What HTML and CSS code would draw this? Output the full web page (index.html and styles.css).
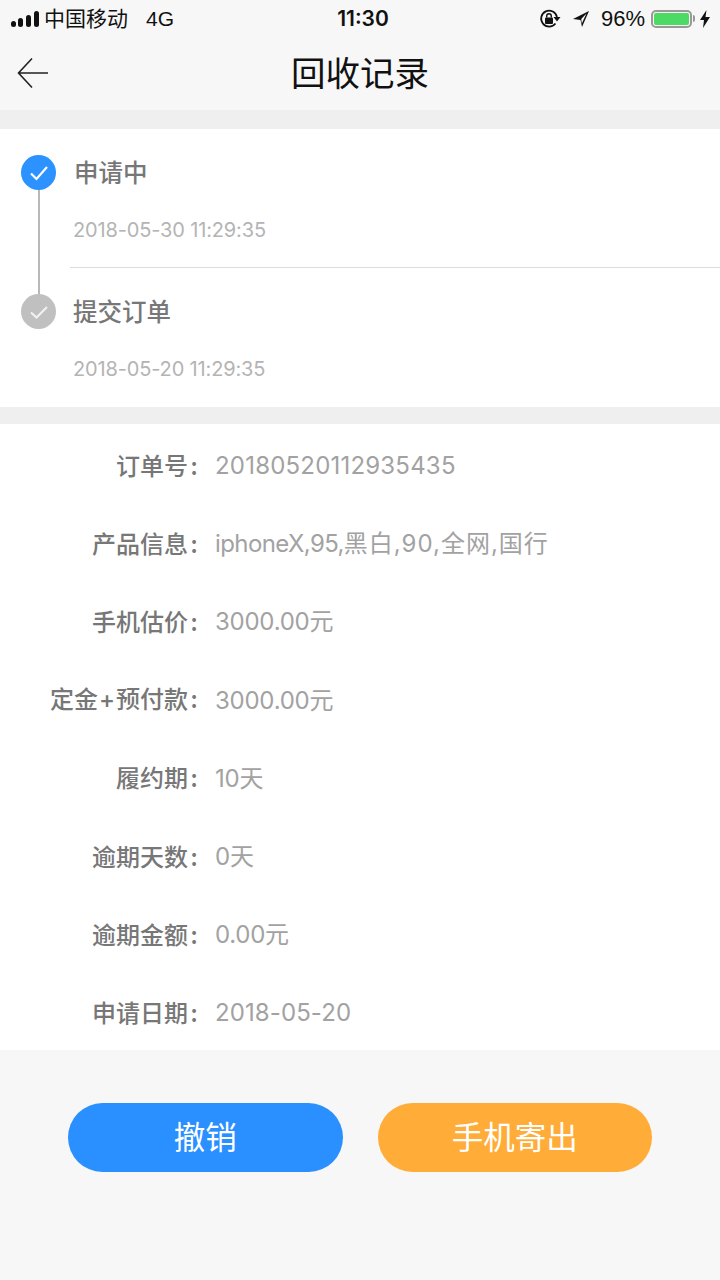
FILE: index.html
```html
<!DOCTYPE html>
<html lang="zh">
<head>
<meta charset="utf-8">
<title>回收记录</title>
<link rel="stylesheet" href="styles.css">
</head>
<body>
<div class="app">
  <div class="status">
    <div class="status-left">
      <svg class="signal" width="29" height="18" viewBox="0 0 29 18"><rect x="0" y="11" width="5" height="6" rx="2.5"/><rect x="7" y="8" width="5" height="9" rx="2.5"/><rect x="15" y="5" width="5" height="12" rx="2.5"/><rect x="23" y="1" width="5" height="16" rx="2.5"/></svg>
      <span class="carrier">中国移动</span>
      <span class="net">4G</span>
    </div>
    <div class="clock">11:30</div>
    <div class="status-right">
      <svg class="lock" width="22" height="22" viewBox="0 0 22 22"><path d="M16.500 15.500A8 8 0 1 1 18 9" fill="none" stroke="#111" stroke-width="1.700"/><path d="M14.500 9h7l-3.500 4.500z" fill="#111"/><rect x="6" y="9.500" width="8" height="6.500" rx="1" fill="#111"/><path d="M7.700 9.500V8a2.300 2.300 0 0 1 4.600 0v1.500" fill="none" stroke="#111" stroke-width="1.400"/></svg>
      <svg class="loc" width="18" height="18" viewBox="0 0 18 18"><path d="M17 1 1 9l7.500 1L10 17z M14.500 3.500 9.200 9l.6 4.500z" fill="#111" fill-rule="evenodd"/></svg>
      <span class="pct">96%</span>
      <div class="battery"><div class="battery-fill"></div></div>
      <div class="battery-cap"></div>
      <svg class="bolt" width="10" height="18" viewBox="0 0 10 18"><path d="M6.500 0 0 10h4l-1 8 7-11H5.500z" fill="#111"/></svg>
    </div>
  </div>
  <div class="nav">
    <svg class="back" width="32" height="32" viewBox="0 0 32 32"><path d="M15 1.500 1.500 16 15 30.500M1.500 16H31" fill="none" stroke="#222" stroke-width="1.600"/></svg>
    <div class="title">回收记录</div>
  </div>
  <div class="band band-top"></div>
  <div class="timeline">
    <div class="step step-first">
      <div class="dot dot-blue"><svg width="20" height="16" viewBox="0 0 20 16"><path d="M2 8.500 7.500 14 18 2" fill="none" stroke="#fff" stroke-width="2.200"/></svg></div>
      <div class="step-text">
        <div class="step-name name-first">申请中</div>
        <div class="step-time">2018-05-30 11:29:35</div>
      </div>
    </div>
    <div class="step step-second">
      <div class="dot dot-gray"><svg width="20" height="16" viewBox="0 0 20 16"><path d="M2 8.500 7.500 13.500 18 3" fill="none" stroke="#f2f2f2" stroke-width="2"/></svg></div>
      <div class="step-text">
        <div class="step-name name-second">提交订单</div>
        <div class="step-time">2018-05-20 11:29:35</div>
      </div>
    </div>
  </div>
  <div class="band band-mid"></div>
  <div class="details">
    <div class="row"><div class="label">订单号<span class="colon">:</span></div><div class="value value-code">20180520112935435</div></div>
    <div class="row"><div class="label">产品信息<span class="colon">:</span></div><div class="value"><span class="tight">iphoneX,95,</span><span class="loose">黑白,90,全网,国行</span></div></div>
    <div class="row"><div class="label">手机估价<span class="colon">:</span></div><div class="value">3000.00元</div></div>
    <div class="row"><div class="label">定金<span class="plus">+</span>预付款<span class="colon">:</span></div><div class="value">3000.00元</div></div>
    <div class="row"><div class="label">履约期<span class="colon">:</span></div><div class="value">10天</div></div>
    <div class="row"><div class="label">逾期天数<span class="colon">:</span></div><div class="value">0天</div></div>
    <div class="row"><div class="label">逾期金额<span class="colon">:</span></div><div class="value">0.00元</div></div>
    <div class="row"><div class="label">申请日期<span class="colon">:</span></div><div class="value value-date">2018-05-20</div></div>
  </div>
  <div class="actions">
    <div class="btn btn-blue">撤销</div>
    <div class="btn btn-orange">手机寄出</div>
  </div>
</div>
</body>
</html>
```
FILE: styles.css
```css
* { box-sizing: border-box; }
html, body { margin: 0; padding: 0; }
body {
  width: 720px;
  height: 1280px;
  overflow: hidden;
  background: #f7f7f7;
  font-family: "Noto Sans CJK SC", sans-serif;
}
.app { width: 720px; height: 1280px; display: flex; flex-direction: column; }
.status {
  height: 37px;
  display: grid;
  grid-template-columns: 1fr auto 1fr;
  align-items: center;
  padding: 0 10px 0 11px;
  color: #111;
  font-size: 21px;
  line-height: 26px;
  font-family: "Liberation Sans", "Noto Sans CJK SC", sans-serif;
}
.status-left { display: flex; align-items: center; }
.signal { fill: #111; margin-right: 4px; }
.net { margin-left: 18px; }
.clock { font-family: "Inter", sans-serif; font-weight: 600; font-size: 21px; margin-left: 5px; }
.status-right { display: flex; align-items: center; justify-content: flex-end; }
.loc { margin-left: 11px; }
.pct { margin-left: 11px; font-size: 22px; }
.battery {
  width: 41px; height: 18px; margin-left: 6px;
  border: 2px solid #999; border-radius: 5px; padding: 1px; background: #f7f7f7;
}
.battery-fill { width: 100%; height: 100%; background: #4cd964; border-radius: 2px; }
.battery-cap { width: 2px; height: 7px; background: #999; margin-left: 1px; border-radius: 0 2px 2px 0; }
.bolt { margin-left: 5px; }
.nav {
  height: 73px;
  position: relative;
  display: flex;
  align-items: center;
  justify-content: center;
  background: #f7f7f7;
}
.back { position: absolute; left: 17px; top: 20px; }
.title { font-size: 34.500px; line-height: 44px; color: #111; padding-bottom: 5px; }
.band { background: #efefef; }
.band-top { height: 19px; }
.band-mid { height: 17px; }
.timeline { height: 278px; background: #fff; padding-left: 21px; display: flex; flex-direction: column; }
.step { display: flex; position: relative; }
.step-first { height: 139px; padding-top: 26px; }
.step-second { height: 139px; padding-top: 26px; }
.step-first::before {
  content: "";
  position: absolute;
  left: 16.500px;
  top: 60px;
  width: 2px;
  height: 106px;
  background: #b9b9b9;
}
.step-first::after {
  content: "";
  position: absolute;
  left: 49px;
  right: 0;
  top: 138px;
  height: 1px;
  background: #dcdcdc;
}
.dot {
  width: 35px; height: 35px; border-radius: 50%;
  display: flex; align-items: center; justify-content: center;
  flex: none; position: relative; z-index: 1;
}
.dot-blue { background: #2c92ff; }
.dot-gray { background: #c0c0c0; }
.step-text { margin-left: 18px; }
.name-second { margin-left: -1px; }
.step-name { font-size: 24.500px; line-height: 33px; margin-bottom: 2px; color: #777; font-weight: 500; }
.step-time {
  font-size: 20px; line-height: 26px; margin-top: 29px; margin-left: -1px; color: #b4b4b4;
  font-family: "Inter", sans-serif; letter-spacing: -.15px;
}
.details { height: 626px; background: #fff; padding-top: 3px; }
.row { height: 78.200px; display: flex; align-items: center; font-size: 24px; line-height: 32px; }
.label { width: 200px; text-align: right; color: #777; font-weight: 500; flex: none; margin-top: -3px; }
.colon { display: inline-block; width: 12px; text-align: center; }
.plus { font-family: "Inter", sans-serif; padding: 0 1px; }
.value {
  margin-left: 15px; color: #a2a2a2; font-size: 24px;
  font-family: "Inter", "Noto Sans CJK SC", sans-serif;
  letter-spacing: -.25px;
}
.value-code { letter-spacing: .2px; }
.value-date { letter-spacing: .1px; }
.tight { letter-spacing: -.6px; }
.loose { letter-spacing: 1px; }
.actions { display: flex; justify-content: center; gap: 35px; padding-top: 53px; }
.btn {
  width: 274.500px; height: 69px; border-radius: 35px;
  display: flex; align-items: center; justify-content: center;
  color: #fff; font-size: 31.500px; line-height: 40px; padding-bottom: 5px;
}
.btn-blue { background: #2a8fff; }
.btn-orange { background: #ffac38; }
```
